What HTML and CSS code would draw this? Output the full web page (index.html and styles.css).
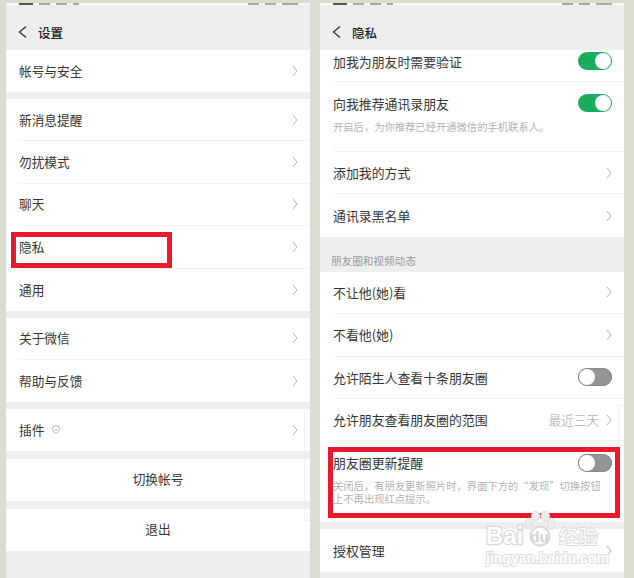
FILE: index.html
```html
<!DOCTYPE html>
<html lang="zh-CN">
<head>
    <meta charset="UTF-8">
    <meta name="viewport" content="width=device-width, initial-scale=1.0">
    <title>设置与隐私</title>
    <link rel="stylesheet" href="styles.css">
</head>
<body>
    <main class="page">
        <!-- 设置 -->
        <section class="phone phone-left">
            <div class="status">
                <div class="status-side"><i class="s1"></i><i class="s2"></i><i class="s2"></i><i class="s4"></i></div>
                <div class="status-side"><i class="s2"></i><i class="s2"></i><i class="s3"></i></div>
            </div>
            <header class="nav">
                <svg class="back" viewBox="0 0 9 14"><path d="M8 1.500 1.500 7 8 12.500"/></svg>
                <h1>设置</h1>
            </header>
            <ul class="group compact">
                <li class="row"><span class="label">帐号与安全</span><svg class="arrow" viewBox="0 0 6 12"><path d="M1 1l4 5-4 5"/></svg></li>
            </ul>
            <ul class="group">
                <li class="row"><span class="label">新消息提醒</span><svg class="arrow" viewBox="0 0 6 12"><path d="M1 1l4 5-4 5"/></svg></li>
                <li class="row"><span class="label">勿扰模式</span><svg class="arrow" viewBox="0 0 6 12"><path d="M1 1l4 5-4 5"/></svg></li>
                <li class="row"><span class="label">聊天</span><svg class="arrow" viewBox="0 0 6 12"><path d="M1 1l4 5-4 5"/></svg></li>
                <li class="row"><span class="label">隐私</span><svg class="arrow" viewBox="0 0 6 12"><path d="M1 1l4 5-4 5"/></svg></li>
                <li class="row"><span class="label">通用</span><svg class="arrow" viewBox="0 0 6 12"><path d="M1 1l4 5-4 5"/></svg></li>
            </ul>
            <ul class="group compact">
                <li class="row"><span class="label">关于微信</span><svg class="arrow" viewBox="0 0 6 12"><path d="M1 1l4 5-4 5"/></svg></li>
                <li class="row"><span class="label">帮助与反馈</span><svg class="arrow" viewBox="0 0 6 12"><path d="M1 1l4 5-4 5"/></svg></li>
            </ul>
            <ul class="group compact wide-gap">
                <li class="row">
                    <span class="label">插件</span>
                    <svg class="shield" viewBox="0 0 8 9"><path d="M4 .6 7.200 1.800v2.600C7.200 6.400 5.600 7.800 4 8.400 2.400 7.800.8 6.400.8 4.400V1.800z"/><path d="M2.500 4.500h3"/></svg>
                    <svg class="arrow" viewBox="0 0 6 12"><path d="M1 1l4 5-4 5"/></svg>
                </li>
            </ul>
            <div class="group action wide-gap">切换帐号</div>
            <div class="group action">退出</div>
            <div class="edge-tab"></div>
            <div class="mark mark-privacy"></div>
        </section>

        <!-- 隐私 -->
        <section class="phone phone-right">
            <div class="status">
                <div class="status-side"><i class="s1"></i><i class="s2"></i><i class="s2"></i><i class="s4"></i></div>
                <div class="status-side"><i class="s2"></i><i class="s2"></i><i class="s3"></i></div>
            </div>
            <header class="nav">
                <svg class="back" viewBox="0 0 9 14"><path d="M8 1.500 1.500 7 8 12.500"/></svg>
                <h1>隐私</h1>
            </header>
            <ul class="group">
                <li class="row row-short"><span class="label">加我为朋友时需要验证</span><span class="switch on"></span></li>
                <li class="row row-note">
                    <div class="row-main"><span class="label">向我推荐通讯录朋友</span><span class="switch on"></span></div>
                    <p class="note">开启后，为你推荐已经开通微信的手机联系人。</p>
                </li>
                <li class="row"><span class="label">添加我的方式</span><svg class="arrow" viewBox="0 0 6 12"><path d="M1 1l4 5-4 5"/></svg></li>
                <li class="row"><span class="label">通讯录黑名单</span><svg class="arrow" viewBox="0 0 6 12"><path d="M1 1l4 5-4 5"/></svg></li>
            </ul>
            <h2 class="group-title">朋友圈和视频动态</h2>
            <ul class="group">
                <li class="row"><span class="label">不让他(她)看</span><svg class="arrow" viewBox="0 0 6 12"><path d="M1 1l4 5-4 5"/></svg></li>
                <li class="row"><span class="label">不看他(她)</span><svg class="arrow" viewBox="0 0 6 12"><path d="M1 1l4 5-4 5"/></svg></li>
                <li class="row"><span class="label">允许陌生人查看十条朋友圈</span><span class="switch"></span></li>
                <li class="row"><span class="label">允许朋友查看朋友圈的范围</span><span class="value">最近三天</span><svg class="arrow" viewBox="0 0 6 12"><path d="M1 1l4 5-4 5"/></svg></li>
                <li class="row row-note row-last">
                    <div class="row-main"><span class="label">朋友圈更新提醒</span><span class="switch"></span></div>
                    <p class="note">关闭后，有朋友更新照片时，界面下方的“发现”切换按钮上不再出现红点提示。</p>
                </li>
            </ul>
            <ul class="group">
                <li class="row"><span class="label">授权管理</span><svg class="arrow" viewBox="0 0 6 12"><path d="M1 1l4 5-4 5"/></svg></li>
            </ul>
            <div class="edge-tab edge-tab-right"></div>
            <div class="mark mark-moments"></div>
        </section>
    </main>

    <div class="watermark">
        <svg class="paw" viewBox="0 0 36 38">
            <ellipse cx="6" cy="14" rx="4" ry="6"/>
            <ellipse cx="13.500" cy="6" rx="4.500" ry="5.500"/>
            <ellipse cx="23.500" cy="6" rx="4.500" ry="5.500"/>
            <ellipse cx="30" cy="14" rx="4" ry="6"/>
            <circle class="paw-body" cx="18" cy="27" r="10"/>
        </svg>
        <div class="wm-top"><span>Bai</span><span class="wm-du">du</span><span class="wm-cn">经验</span></div>
        <div class="wm-url">jingyan.baidu.com</div>
    </div>
</body>
</html>
```

FILE: styles.css
```css
* {
    margin: 0;
    padding: 0;
    box-sizing: border-box;
}

body {
    position: relative;
    height: 578px;
    overflow: hidden;
    background-color: #dcddd1;
    font-family: "Noto Sans CJK SC", "Noto Sans", sans-serif;
    color: #363636;
}

ul {
    list-style: none;
}

.page {
    display: flex;
    gap: 10px;
    padding-left: 6px;
}

.phone {
    position: relative;
    width: 304px;
    height: 575px;
    margin-top: 3px;
    background-color: #eeeeef;
    overflow: hidden;
}

.status {
    display: flex;
    justify-content: space-between;
    height: 2px;
    padding: 0 12px 0 13px;
    background-color: #f6f6f4;
}

.status-side {
    display: flex;
    gap: 6px;
}

.status i {
    display: block;
    height: 2px;
    background-color: #a8a8a8;
}

.status .s1 {
    width: 14px;
    background-color: #555;
}

.s2 { width: 11px; }
.s3 { width: 16px; }
.s4 { width: 6px; }

.nav {
    display: flex;
    align-items: center;
    height: 45px;
    padding: 9px 0 0 12px;
    gap: 11px;
    color: #222;
}

.nav h1 {
    font-size: 12.5px;
    font-weight: 500;
}

.back {
    width: 9px;
    height: 14px;
    fill: none;
    stroke: #333;
    stroke-width: 1.3;
}

.group {
    margin-bottom: 7px;
    background-color: #fff;
}

.wide-gap {
    margin-bottom: 8px;
}

.row {
    display: flex;
    align-items: center;
    height: 42.4px;
    margin-left: 13px;
    padding-right: 12px;
    border-bottom: 1px solid #f3f3f3;
}

.compact .row {
    height: 42px;
}

.group .row:last-child {
    border-bottom: none;
}

.label {
    font-size: 12.7px;
    white-space: nowrap;
}

.phone-left .label {
    margin-top: -1px;
}

.phone-right .label {
    font-size: 12.9px;
}

.arrow {
    width: 6px;
    height: 12px;
    margin-left: auto;
    fill: none;
    stroke: #b4b4b4;
    stroke-width: 1;
}

.shield {
    width: 8px;
    height: 9px;
    margin-left: 8px;
    fill: none;
    stroke: #9a9a9a;
    stroke-width: .7;
}

.action {
    height: 42px;
    line-height: 40px;
    text-align: center;
    font-size: 12.7px;
}

.edge-tab {
    position: absolute;
    top: 400px;
    right: 0;
    width: 6px;
    height: 118px;
    border: 1px solid #f1f1f1;
    border-right: none;
    border-radius: 3px 0 0 3px;
}

.edge-tab-right {
    top: 402px;
}

.row-short {
    height: 32px;
    padding-bottom: 9px;
}

.row-note {
    display: block;
    height: 70px;
    padding-top: 11px;
}

.row-last {
    height: 81px;
    padding-top: 11.5px;
}

.row-main {
    display: flex;
    align-items: center;
    justify-content: space-between;
    height: 20px;
}

.note {
    margin-top: 6.5px;
    padding-right: 6px;
    font-size: 10.3px;
    line-height: 13px;
    color: #b3b3b3;
}

.group-title {
    display: flex;
    align-items: flex-end;
    height: 35px;
    margin-top: -7px;
    padding: 0 0 4px 11px;
    font-size: 10.6px;
    font-weight: 400;
    color: #9b9b9b;
}

.switch {
    position: relative;
    display: block;
    flex: none;
    width: 34px;
    height: 18px;
    margin-left: auto;
    border-radius: 9px;
    background-color: #969496;
}

.switch::after {
    content: "";
    position: absolute;
    top: 1px;
    left: 1px;
    width: 16px;
    height: 16px;
    border-radius: 50%;
    background-color: #fff;
}

.switch:not(.on) {
    box-shadow: inset 0 0 0 1px #8a888a;
}

.switch.on {
    background-color: #1aad5e;
}

.switch.on::after {
    left: 17px;
}

.value {
    margin-left: auto;
    font-size: 12.6px;
    color: #c0c0c0;
}

.value + .arrow {
    margin-left: 7px;
}

.mark {
    position: absolute;
    border: 5px solid #e8192c;
}

.mark-privacy {
    top: 229px;
    left: 5px;
    width: 161px;
    height: 36px;
}

.mark-moments {
    top: 444px;
    left: 8px;
    width: 292px;
    height: 71px;
}

/* watermark sits on top of everything */
.watermark {
    position: absolute;
    top: 510px;
    left: 486px;
    width: 112px;
}

.paw {
    position: absolute;
    top: 0;
    left: 37px;
    width: 34px;
    height: 37px;
    fill: #ececec;
    stroke: #dcdcdc;
    stroke-width: 1;
}

.paw-body {
    fill: #fff;
    stroke-width: 2.5;
}

.wm-top {
    position: relative;
    display: flex;
    align-items: flex-end;
    height: 22px;
    margin-top: 15px;
    font-family: "Liberation Sans", sans-serif;
    font-size: 24px;
    line-height: 22px;
    font-weight: 700;
    color: #fff;
    -webkit-text-stroke: 2.5px #d9d9d9;
    paint-order: stroke fill;
}

.wm-du {
    margin-left: 7px;
    font-size: 15px;
    line-height: 20px;
    -webkit-text-stroke: 0;
    color: #d4d4d4;
}

.wm-cn {
    margin-left: auto;
    font-family: "Noto Sans CJK SC", sans-serif;
    font-size: 19.5px;
    font-weight: 400;
    -webkit-text-stroke: 2px #dcdcdc;
    paint-order: stroke fill;
}

.wm-url {
    margin-top: 5px;
    font-family: "Liberation Sans", sans-serif;
    font-size: 14px;
    line-height: 12px;
    font-weight: 700;
    white-space: nowrap;
    color: #fff;
    -webkit-text-stroke: 2px #e0e0e0;
    paint-order: stroke fill;
}
```
